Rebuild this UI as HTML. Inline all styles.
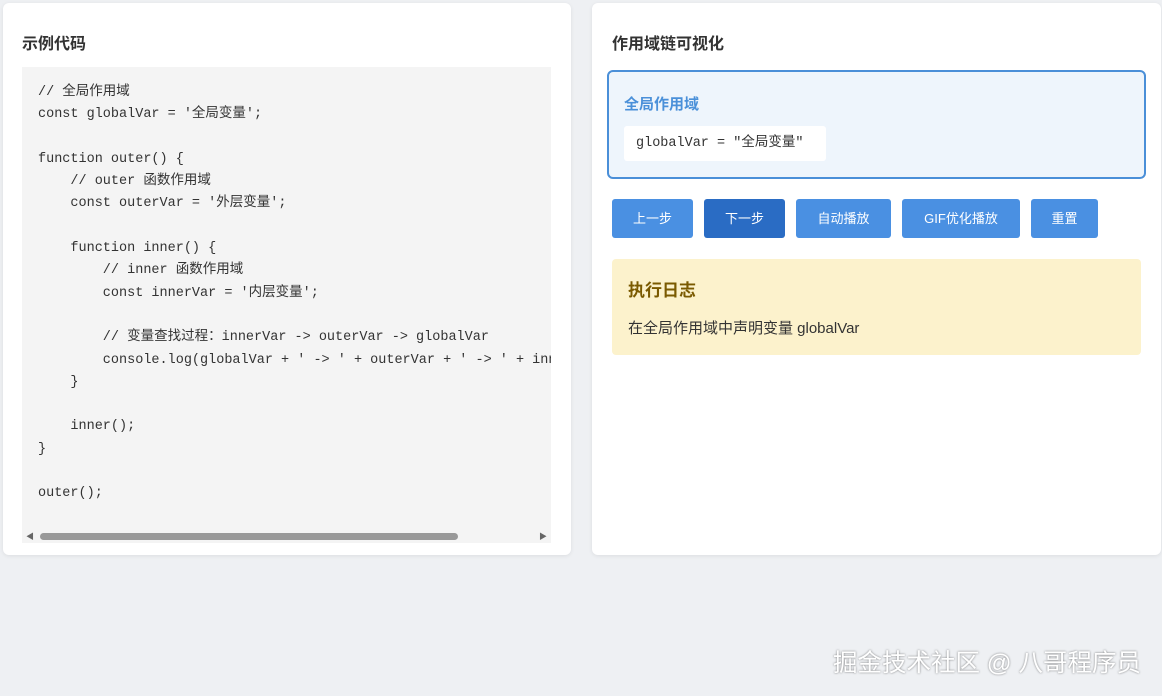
<!DOCTYPE html><html><head><meta charset="utf-8"><style>
body{margin:0;width:1162px;height:696px;background:#eef0f3;font-family:"Liberation Sans","Noto Sans CJK SC",sans-serif;position:relative;overflow:hidden}
.card{position:absolute;top:3px;height:552px;background:#fff;border-radius:6px;box-shadow:0 1px 4px rgba(0,0,0,.08)}
h2{position:absolute;margin:0;font-size:16px;font-weight:bold;color:#333;top:27px}
.code{position:absolute;left:19px;top:64px;width:529px;height:476px;background:#f4f4f4;overflow:hidden}
pre{margin:0;position:absolute;left:16px;top:15px;font-family:"Liberation Mono","Noto Sans CJK SC",monospace;font-size:13.5px;line-height:22.3px;color:#333}
.sb{position:absolute;left:0;right:0;bottom:0;height:14px;background:#f4f4f4}
.thumb{position:absolute;left:18px;top:4px;width:418px;height:7px;background:#999;border-radius:4px}
.btn{position:absolute;top:196px;height:39px;background:#4a90e2;color:#fff;font-size:13px;border-radius:3px;text-align:center;line-height:39px}
</style></head><body>
<div class="card" style="left:3px;width:568px">
<h2 style="left:19px">示例代码</h2>
<div class="code"><pre>// 全局作用域
const globalVar = '全局变量';

function outer() {
    // outer 函数作用域
    const outerVar = '外层变量';

    function inner() {
        // inner 函数作用域
        const innerVar = '内层变量';

        // 变量查找过程：innerVar -> outerVar -> globalVar
        console.log(globalVar + ' -> ' + outerVar + ' -> ' + innerVar);
    }

    inner();
}

outer();</pre>
<div class="sb"><span style="position:absolute;left:4px;top:2px;font-size:8px;color:#666">◀</span><div class="thumb"></div><span style="position:absolute;right:4px;top:2px;font-size:8px;color:#666">▶</span></div>
</div></div>
<div class="card" style="left:592px;width:569px">
<h2 style="left:20px">作用域链可视化</h2>
<div style="position:absolute;left:15px;top:67px;width:535px;height:105px;border:2px solid #4a8fd8;border-radius:6px;background:#eef5fc">
<div style="position:absolute;left:15px;top:21px;color:#4a90d9;font-weight:bold;font-size:15px">全局作用域</div>
<div style="position:absolute;left:15px;top:54px;width:202px;height:35px;background:#fff;border-radius:3px;font-family:'Liberation Mono','Noto Sans CJK SC',monospace;font-size:13.5px;line-height:35px;color:#333;text-indent:12px">globalVar = "全局变量"</div>
</div>
<div class="btn" style="left:20px;width:81px">上一步</div>
<div class="btn" style="left:112px;width:81px;background:#2a6cc4">下一步</div>
<div class="btn" style="left:204px;width:95px">自动播放</div>
<div class="btn" style="left:310px;width:118px">GIF优化播放</div>
<div class="btn" style="left:439px;width:67px">重置</div>
<div style="position:absolute;left:20px;top:256px;width:529px;height:96px;background:#fcf2cc;border-radius:4px">
<div style="position:absolute;left:16px;top:17px;font-size:17px;font-weight:bold;color:#7a5a00">执行日志</div>
<div style="position:absolute;left:16px;top:58px;font-size:15px;color:#333">在全局作用域中声明变量 globalVar</div>
</div></div>
<div style="position:absolute;left:833px;top:644px;font-size:24.5px;color:#fff;text-shadow:0 0 2px rgba(0,0,0,.5);white-space:nowrap">掘金技术社区 @ 八哥程序员</div>
</body></html>
